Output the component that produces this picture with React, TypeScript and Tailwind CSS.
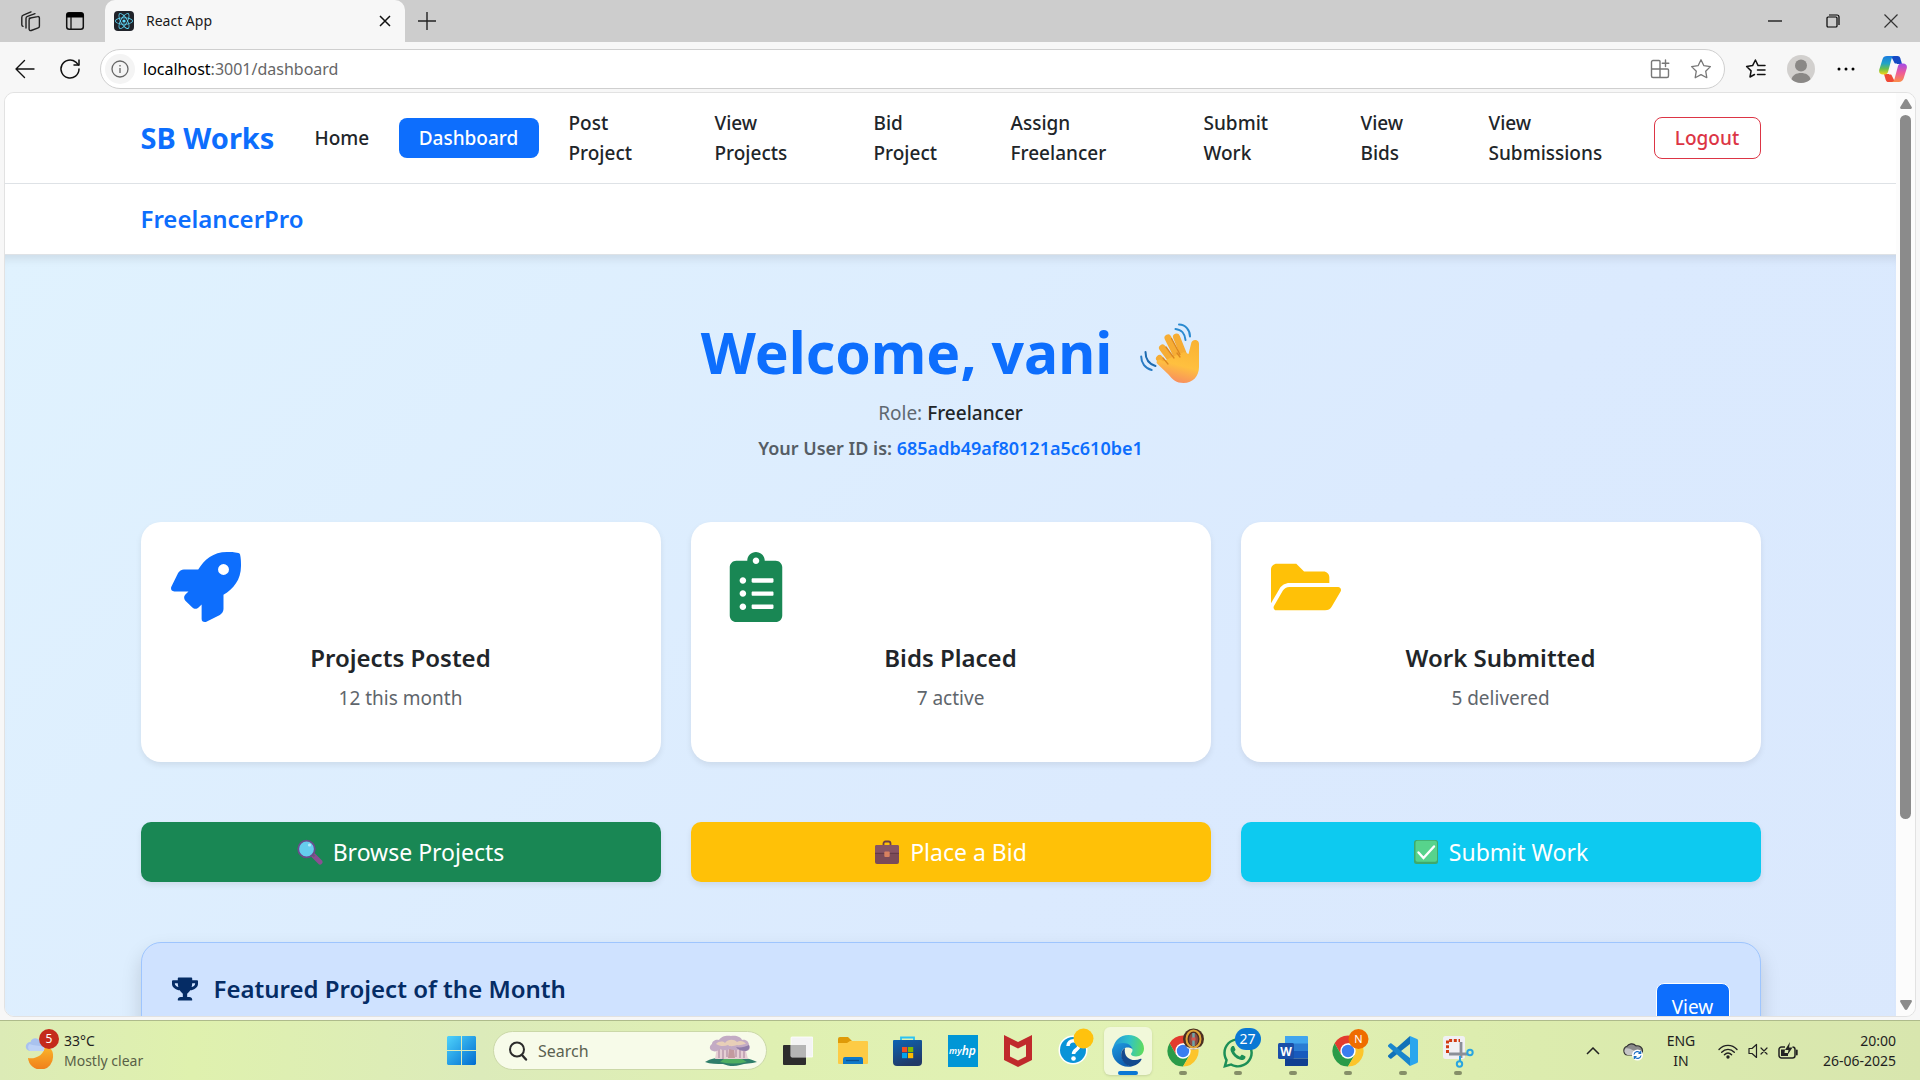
import type { ReactNode } from 'react';
import { FaClipboardList, FaFolderOpen, FaReact, FaRocket, FaTrophy, FaWhatsapp } from 'react-icons/fa';

/* ---------- Browser icons ---------- */

function WorkspacesIcon() {
  return (
    <svg viewBox="0 0 22 22" className="size-[22px]" fill="none" stroke="#222" strokeWidth="1.4" strokeLinejoin="round" strokeLinecap="round">
      <path d="M10.2 8.3 18.6 6.6a1.4 1.4 0 0 1 1.8 1.4v8.3c0 .8-.5 1.4-1.2 1.6l-7 2.6c-1 .4-2.1-.3-2.1-1.4V9.900a1.600 1.600 0 0 1 1.200-1.500z" />
      <path d="M7 18V8.600c0-1 .6-1.900 1.500-2.200L16 3.700" />
      <path d="M4 16.400c-.7-.2-1.200-.8-1.200-1.600V7.400c0-1 .6-1.900 1.500-2.200L12 1.900" />
    </svg>
  );
}

function TabActionsIcon() {
  return (
    <svg viewBox="0 0 20 20" className="size-5" fill="none">
      <rect x="1.700" y="1.700" width="16.600" height="16.600" rx="2.500" stroke="#111" strokeWidth="1.500" />
      <path d="M1.500 6.500V4a2.500 2.500 0 0 1 2.500-2.500h12A2.500 2.500 0 0 1 18.500 4v2.500z" fill="#000" />
      <path d="M6 6v12" stroke="#111" strokeWidth="1.300" />
    </svg>
  );
}

function BackIcon() {
  return (
    <svg viewBox="0 0 20 20" className="size-5" fill="none" stroke="#111" strokeWidth="1.400" strokeLinecap="round" strokeLinejoin="round">
      <path d="M19 10H1M9.500 1.500 1 10l8.500 8.500" />
    </svg>
  );
}

function ReloadIcon() {
  return (
    <svg viewBox="0 0 22 22" className="size-[22px]" fill="none" stroke="#111" strokeWidth="1.500" strokeLinecap="round" strokeLinejoin="round">
      <path d="M20 11a9 9 0 1 1-3.200-6.900L19.600 7" />
      <path d="M20 2v5h-5" />
    </svg>
  );
}

function InfoIcon() {
  return (
    <svg viewBox="0 0 18 18" className="size-[18px]" fill="none" stroke="#666" strokeWidth="1.300">
      <circle cx="9" cy="9" r="8" />
      <path d="M9 8v5M9 5v1.400" />
    </svg>
  );
}

function AppsAddIcon() {
  return (
    <svg viewBox="0 0 20 20" className="size-5" fill="none" stroke="#777" strokeWidth="1.400" strokeLinejoin="round" strokeLinecap="round">
      <path d="M10 2.500a1 1 0 0 0-1-1H3a1.500 1.500 0 0 0-1.500 1.500v14A1.500 1.500 0 0 0 3 18.500h14a1.500 1.500 0 0 0 1.500-1.500v-6a1 1 0 0 0-1-1h-16M10 2.500v16" />
      <path d="M15.500 1v6.500M12.200 4.200h6.600" />
    </svg>
  );
}

function StarIcon() {
  return (
    <svg viewBox="0 0 22 22" className="size-[22px]" fill="none" stroke="#777" strokeWidth="1.300" strokeLinejoin="round">
      <path d="m11 1.800 2.900 5.900 6.500.9-4.700 4.600 1.100 6.500-5.800-3.100-5.800 3.100 1.100-6.500L1.600 8.600l6.500-.9z" />
    </svg>
  );
}

function FavoritesIcon() {
  return (
    <svg viewBox="0 0 22 22" className="size-[22px]" fill="none" stroke="#111" strokeWidth="1.500" strokeLinejoin="round" strokeLinecap="round">
      <path d="M9.500 16.500 5 19l1.100-6.100L1.600 8.500l6-.9L10.400 2l2.700 5.600H20" />
      <path d="M12.500 12H20M12.500 16.500H20" />
    </svg>
  );
}

function AvatarIcon() {
  return (
    <svg viewBox="0 0 28 28" className="size-7">
      <circle cx="14" cy="14" r="14" fill="#d2d0ce" />
      <circle cx="14" cy="10.500" r="6" fill="#8a8886" />
      <path d="M4.500 24.200C5.500 20 9.300 18 14 18s8.500 2 9.500 6.200A14 14 0 0 1 14 28a14 14 0 0 1-9.500-3.800z" fill="#8a8886" />
    </svg>
  );
}

function CopilotIcon() {
  return (
    <svg viewBox="0 0 28 28" className="size-7">
      <defs>
        <linearGradient id="cpA" x1="0" y1="0" x2="0" y2="1">
          <stop offset="0" stopColor="#1b7be0" />
          <stop offset=".4" stopColor="#21a3c8" />
          <stop offset=".7" stopColor="#6cc04a" />
          <stop offset="1" stopColor="#f5d416" />
        </linearGradient>
        <linearGradient id="cpB" x1="0" y1="0" x2="0" y2="1">
          <stop offset="0" stopColor="#a24be8" />
          <stop offset=".5" stopColor="#ee5b9a" />
          <stop offset="1" stopColor="#fb8f4a" />
        </linearGradient>
      </defs>
      <path d="M12 1h6.500c1.500 0 2.300.8 2.800 2.300L23 9h-7z" fill="#1549c4" />
      <path d="M16 27H9.500c-1.500 0-2.300-.8-2.800-2.300L5 19h7z" fill="#ee4a36" />
      <path d="M8 1h7c-1.400.4-2 1.500-2.500 3L9 17c-.5 1.500-1.500 2.500-3 2.500H4c-3 0-4.500-2-3.700-5L3.500 4.200C4.100 2.200 5.800 1 8 1z" fill="url(#cpA)" />
      <path d="M20 27h-7c1.400-.4 2-1.500 2.500-3L19 11c.5-1.500 1.500-2.500 3-2.500h2c3 0 4.500 2 3.700 5l-3.200 10.300c-.6 2-2.300 3.200-4.500 3.200z" fill="url(#cpB)" />
      <path d="M13.500 8.500H18L14.500 19.500H10z" fill="#fdf7fb" />
    </svg>
  );
}

/* ---------- Emoji drawings ---------- */

function WaveEmoji() {
  return (
    <svg viewBox="0 0 60 60" className="size-[60px]" fill="none" strokeLinecap="round">
      <defs>
        <linearGradient id="hand" gradientUnits="userSpaceOnUse" x1="44" y1="14" x2="32" y2="60">
          <stop offset="0" stopColor="#f9b233" />
          <stop offset=".6" stopColor="#ffc03f" />
          <stop offset="1" stopColor="#f78a62" />
        </linearGradient>
      </defs>
      <path d="m19.500 35.500 9 10M22.500 25l11 15M28 15l11 22M36.500 14l8 20" stroke="#f6ad35" strokeWidth="7" />
      <path d="M17 38c2-2 4-1.500 6 .5L30 35l14-6 4.500 2L51 21c.5-5.500 8.500-5 8 .5V44c0 9-6 16-15.500 16-7 0-11-3.500-15-8.500L17.500 41c-1-1.200-1.300-2-.5-3z" fill="url(#hand)" />
      <path d="m26 24 8 11M31.500 15.500l8.500 16M37 30l3 4M23 35l5 6" stroke="#dc8720" strokeWidth="1.300" />
      <path d="M35.500 6c6 .5 9.500 5 10 11" stroke="#2a8ad0" strokeWidth="2" />
      <path d="M39 1.500c6.500 0 11 5.500 11 12" stroke="#2a8ad0" strokeWidth="2" />
      <path d="M5.500 29c0 6.500 3.500 12 10 14" stroke="#1e6bb0" strokeWidth="2" />
      <path d="M1.200 33.500c0 6.500 4 12 10.500 13.500" stroke="#2a7cc4" strokeWidth="2" />
    </svg>
  );
}

function MagnifierEmoji() {
  return (
    <svg viewBox="0 0 26 26" className="size-[26px]">
      <path d="m16 16 7 7" stroke="#8a4f93" strokeWidth="5" strokeLinecap="round" />
      <path d="m14.500 14.500 3 3" stroke="#6b5b78" strokeWidth="2" />
      <circle cx="9.500" cy="10" r="8.300" fill="#65cdee" stroke="#6a4c8c" strokeWidth="1.800" />
      <circle cx="12.500" cy="6" r="1.600" fill="#b4ecfb" />
    </svg>
  );
}

function BriefcaseEmoji() {
  return (
    <svg viewBox="0 0 26 26" className="size-[26px]">
      <path d="M9.500 6V4.500a2 2 0 0 1 2-2h3a2 2 0 0 1 2 2V6" fill="none" stroke="#6b3f4c" strokeWidth="1.800" />
      <rect x="1" y="6" width="24" height="19" rx="2" fill="#7b4b58" />
      <path d="M1 14V8a2 2 0 0 1 2-2h20a2 2 0 0 1 2 2v6z" fill="#875564" />
      <path d="M1 14.300h24" stroke="#5e3744" strokeWidth=".9" />
      <rect x="10.300" y="12.500" width="5.400" height="5.400" rx="1" fill="#d98160" />
    </svg>
  );
}

function CheckEmoji() {
  return (
    <svg viewBox="0 0 26 26" className="size-[26px]">
      <rect x="1" y="1" width="24" height="24" rx="2.500" fill="#3fa96b" />
      <rect x="2.500" y="1.800" width="21.500" height="21" rx="2" fill="#57d38c" />
      <path d="m5.500 13.500 5 5.500L21 7.500" fill="none" stroke="#fff" strokeWidth="2.400" strokeLinecap="round" />
    </svg>
  );
}

/* ---------- Taskbar icons ---------- */

function WeatherIcon() {
  return (
    <svg viewBox="0 0 30 36" className="h-9 w-[30px]">
      <defs>
        <linearGradient id="moon" x1="0" y1="0" x2="0" y2="1">
          <stop offset="0" stopColor="#fbb92c" />
          <stop offset="1" stopColor="#f07f1b" />
        </linearGradient>
      </defs>
      <path d="M20 12c5 2 8.500 5.500 8 11a12.500 12.500 0 0 1-25 2c6 1.500 17-2 17-13z" fill="url(#moon)" />
      <path d="M5 18a4.500 4.500 0 0 1 .5-9C6.500 5.500 10 4.500 13 6l6 5v7z" fill="#a9c2ef" />
      <path d="M5 18a4.500 4.500 0 0 1-.5-7c4 2 9 1 14.500 3v4z" fill="#bdd2f7" />
    </svg>
  );
}

function WindowsIcon() {
  return (
    <svg viewBox="0 0 29 29" className="size-[29px]">
      <defs>
        <linearGradient id="win" x1="0" y1="0" x2="29" y2="29" gradientUnits="userSpaceOnUse">
          <stop offset="0" stopColor="#4fd3fb" />
          <stop offset="1" stopColor="#006cd0" />
        </linearGradient>
      </defs>
      <path d="M1 0h13v14H0V1zM15 0h13l1 1v13H15zM0 15h14v14H1l-1-1zM15 15h14v13l-1 1H15z" fill="url(#win)" />
    </svg>
  );
}

function SearchIcon() {
  return (
    <svg viewBox="0 0 20 20" className="size-5" fill="none" stroke="#2b2b2b" strokeLinecap="round">
      <circle cx="9" cy="8.500" r="7" strokeWidth="2" />
      <path d="m14 14 4 4.500" strokeWidth="2.400" />
    </svg>
  );
}

function MushroomTreeIcon() {
  return (
    <svg viewBox="0 0 54 32" className="h-8 w-[54px]">
      <path d="M1 27c6-4 15-5 26-5s21 2 26 5c-6 2-12 1-17 3-6 2-12 1-17-1-6 0-13 0-18-2z" fill="#2f7d6a" />
      <path d="M16 27c4-4 8-6 13-6s9 3 14 6c-9 2-18 2-27 0z" fill="#4fae62" />
      <path d="M13 12h28l3 12H11z" fill="#e6cfd4" />
      <path d="M15 14v9M19 14v10M23 13v9M32 13v9M36 14v9M40 13v10" stroke="#b593a8" strokeWidth="1.300" />
      <path d="M25 13h5l1 10h-7z" fill="#c39a9f" />
      <path d="M9 16c-4-1-4-5-1-7 0-3 4-5 7-4 2-4 8-5 12-4 5-1 10 1 11 4 4-1 7 2 7 5 2 3 0 6-3 6-3 1-5-1-7-2-3 2-7 1-9 0-4 2-8 1-10 0-2 2-5 3-7 2z" fill="#c3abc4" />
      <path d="M12 9c3-3 7-3 9-1 3-4 9-4 12-1 3-2 7-1 9 2-4 0-6 2-9 1-3 1-7 2-9 0-4 2-9 1-12-1z" fill="#e8cfb8" />
      <path d="M32 12c4 1 9 0 13-2 1 3 0 5-3 6-4 0-8-1-10-4z" fill="#8f7da9" />
    </svg>
  );
}

function TaskViewIcon() {
  return (
    <svg viewBox="0 0 30 30" className="size-[30px]">
      <rect x="0" y="9" width="23" height="20" rx="1" fill="#2d2d2d" />
      <rect x="8" y="1" width="22" height="20" rx="1" fill="#f4f4f4" stroke="#fff" strokeWidth=".8" />
      <path d="M8 9h15v12H8z" fill="#b5b5b5" />
    </svg>
  );
}

function ExplorerIcon() {
  return (
    <svg viewBox="0 0 30 28" className="h-7 w-[30px]">
      <path d="M0 2a2 2 0 0 1 2-2h8l4 4v4H0z" fill="#df9a08" />
      <path d="M0 6h9l3-2h17a1 1 0 0 1 1 1v21a1 1 0 0 1-1 1H1a1 1 0 0 1-1-1z" fill="#fdcb45" />
      <path d="M5 27v-5a2 2 0 0 1 2-2h16a2 2 0 0 1 2 2v5z" fill="#0f79c9" />
      <path d="M8 23.500h13" stroke="#0a4f8f" strokeWidth="1.300" />
    </svg>
  );
}

function StoreIcon() {
  return (
    <svg viewBox="0 0 29 30" className="h-[30px] w-[29px]">
      <defs>
        <linearGradient id="store" x1="0" y1="0" x2=".4" y2="1">
          <stop offset="0" stopColor="#0c64b4" />
          <stop offset="1" stopColor="#213a68" />
        </linearGradient>
      </defs>
      <path d="M8 5V1.500h13V5" fill="none" stroke="#2cc3f3" strokeWidth="1.800" />
      <path d="M1 4h27a1 1 0 0 1 1 1v21a4 4 0 0 1-4 4H4a4 4 0 0 1-4-4V5a1 1 0 0 1 1-1z" fill="url(#store)" />
      <path d="M9 11h5.200v5.200H9z" fill="#f25022" />
      <path d="M15 11h5.200v5.200H15z" fill="#7fba00" />
      <path d="M9 17h5.200v5.200H9z" fill="#00a4ef" />
      <path d="M15 17h5.200v5.200H15z" fill="#ffb900" />
    </svg>
  );
}

function MyHpIcon() {
  return (
    <span className="flex h-8 w-[30px] items-center justify-center bg-[#0096d6] text-[9px] font-semibold italic leading-none text-white">
      my<span className="text-xs leading-none">hp</span>
    </span>
  );
}

function McAfeeIcon() {
  return (
    <svg viewBox="0 0 28 32" className="h-8 w-7">
      <path d="m0 0 14 7L28 0v25l-14 7-14-7z" fill="#c02a2c" />
      <path d="m6 9.500 8 4 8-4V21.500l-8 4-8-4z" fill="#e6f2ba" />
    </svg>
  );
}

function HelpIcon() {
  return (
    <svg viewBox="0 0 36 38" className="h-[38px] w-9">
      <circle cx="15" cy="22" r="14.500" fill="#fff" />
      <circle cx="15" cy="22" r="13" fill="#0a94d8" />
      <path d="M10 18c0-7 11-7 11-.5 0 4.500-5.500 4-5.500 8.500" fill="none" stroke="#fff" strokeWidth="3.500" />
      <circle cx="15.500" cy="30.500" r="2.300" fill="#fff" />
      <circle cx="25.500" cy="10.500" r="10" fill="#ffc20e" />
    </svg>
  );
}

function EdgeIcon() {
  return (
    <svg viewBox="0 0 32 32" className="size-8">
      <defs>
        <linearGradient id="edTop" x1="0" y1=".4" x2="1" y2=".5">
          <stop offset="0" stopColor="#2397d8" />
          <stop offset=".5" stopColor="#2fc2c9" />
          <stop offset="1" stopColor="#5fdc5c" />
        </linearGradient>
        <linearGradient id="edLeft" x1="0" y1="0" x2=".5" y2="1">
          <stop offset="0" stopColor="#1e9ce0" />
          <stop offset="1" stopColor="#0d5eb0" />
        </linearGradient>
      </defs>
      <path d="M1 14C2 6 8 0 16.500 0 25 0 32 6 32 13.500c0 5-3.500 8-8 8-3 0-5-1-5-2.500 0-1 1.500-1.500 1.500-4 0-3.500-4-6-9-6-5 0-9 2-10.500 5z" fill="url(#edTop)" />
      <path d="M0 16c0-4.500 5-8 11-8 6 0 9.500 3.500 9.500 6.500-1-1.500-3-2-5-2-4 0-7 3.500-6 8.500 1 6 6 10.500 11 10.200C10 34 0 26 0 16z" fill="url(#edLeft)" />
      <path d="M13 13c-4 2-4.500 7-3 11 2 5.500 6.500 8 11 7 4-1 7-3.500 8.500-6.500.3-.7-.2-1-.8-.7C20.500 27.500 11 23 13 13z" fill="#134a8e" />
    </svg>
  );
}

function ChromeIcon({ badge }: { badge: ReactNode }) {
  return (
    <svg viewBox="0 0 38 40" className="h-10 w-[38px]">
      <path d="M3.600 16.200A15.500 15.500 0 0 1 30.400 16.200H17L10.300 27.900z" fill="#e33b2e" />
      <path d="M3.600 16.200A15.500 15.500 0 0 0 17 39.500l6.700-11.600H10.300z" fill="#2a9b48" />
      <path d="M30.400 16.200A15.500 15.500 0 0 1 17 39.500l6.700-11.600L17 16.200z" fill="#fcc52b" />
      <circle cx="17" cy="24" r="7.700" fill="#fff" />
      <circle cx="17" cy="24" r="6.200" fill="#3a7df0" />
      {badge}
    </svg>
  );
}

function IdolBadge() {
  return (
    <g>
      <circle cx="27.500" cy="12" r="10.500" fill="#4a2f22" />
      <ellipse cx="27.500" cy="12" rx="7" ry="8.500" fill="none" stroke="#e0a53a" strokeWidth="2" />
      <ellipse cx="27.500" cy="12.500" rx="4.500" ry="6.800" fill="#8e4a44" />
      <path d="M27.500 6v13" stroke="#6fa5a8" strokeWidth="2.500" />
      <path d="M25.500 12h4" stroke="#d8574f" strokeWidth="3" />
      <path d="M20 19c4 3 11 3 15 0l-1.500 2.200c-3 1.800-9 1.800-12 0z" fill="#e8dfd2" />
    </g>
  );
}

function LetterBadge() {
  return (
    <g>
      <circle cx="27.500" cy="12" r="10" fill="#ef6c00" />
      <text x="27.500" y="16" textAnchor="middle" fontSize="11" fill="#fff">N</text>
    </g>
  );
}

function WordIcon() {
  return (
    <svg viewBox="0 0 30 30" className="size-[30px]">
      <path d="M7 0h22a1 1 0 0 1 1 1v7H7z" fill="#41a5ee" />
      <path d="M7 7.500h23V15H7z" fill="#2b7cd3" />
      <path d="M7 15h23v7.500H7z" fill="#185abd" />
      <path d="M7 22.500h23V29a1 1 0 0 1-1 1H7z" fill="#103f91" />
      <rect x="0" y="7" width="16" height="16" rx="1.500" fill="#1a4fa8" />
      <text x="8" y="19.500" textAnchor="middle" fontSize="12" fontWeight="700" fill="#fff">W</text>
    </svg>
  );
}

function VsCodeIcon() {
  return (
    <svg viewBox="0 0 30 30" className="size-[30px]">
      <path d="M22 0v8L3.500 22.500c-.5.400-1 .4-1.500 0L.3 21c-.5-.5-.5-1.200 0-1.700z" fill="#1272b8" />
      <path d="M22 30v-8L3.500 7.500c-.5-.4-1-.4-1.500 0L.3 9c-.5.500-.5 1.200 0 1.700z" fill="#1a86cc" />
      <path d="m22 0 7 3c.6.300 1 .8 1 1.500v21c0 .7-.4 1.200-1 1.500l-7 3z" fill="#2aa6ee" />
    </svg>
  );
}

function SnipIcon() {
  return (
    <svg viewBox="0 0 32 34" className="h-[34px] w-8" fill="none">
      <rect x="1" y="2" width="22" height="23" rx="2.500" fill="#f1f0f4" />
      <path d="M5.500 19V6.500H18" stroke="#d13a12" strokeWidth="3" strokeDasharray="3 1.700" />
      <path d="M19 8v16M7 20h19" stroke="#8b8f98" strokeWidth="2.800" />
      <circle cx="28" cy="18.500" r="2.700" stroke="#2aa5e0" strokeWidth="2" />
      <path d="M18 22v5" stroke="#2aa5e0" strokeWidth="2" />
      <circle cx="17.500" cy="30" r="2.700" stroke="#2aa5e0" strokeWidth="2" />
    </svg>
  );
}

function WhatsAppIcon() {
  return (
    <span className="relative flex size-[34px] items-center justify-center">
      <FaWhatsapp className="mt-1 size-[34px] shrink-0 text-[#1d8f57]" />
      <span className="absolute -top-1.5 left-3.5 flex h-[22px] w-[26px] items-center justify-center rounded-full bg-[#0a78d4] text-sm leading-none text-white">
        27
      </span>
    </span>
  );
}

function OneDriveIcon() {
  return (
    <svg viewBox="0 0 22 20" className="h-5 w-[22px]">
      <path d="M5.500 14a4.500 4.500 0 0 1-.5-8.700C6.500 2.800 11 1.500 14 4.800c4-.5 6.500 2 6.500 4.700s-1.500 4.500-4 4.500z" fill="#8b8b8b" stroke="#333" strokeWidth="1.200" />
      <path d="M5.500 14a4 4 0 0 1-2-6.500c5-1 8 3.500 16 4-.5 1.500-1.500 2.500-3 2.500z" fill="#c6c6c6" />
      <circle cx="15.500" cy="14" r="5.500" fill="#fff" />
      <path d="M12 13.500a3.600 3.600 0 0 1 6.400-1.500M19 14.500a3.600 3.600 0 0 1-6.400 1.500M18.700 10v2.300h-2.300M12.300 18v-2.300h2.300" fill="none" stroke="#1a6fc4" strokeWidth="1.200" />
    </svg>
  );
}

function WifiIcon() {
  return (
    <svg viewBox="0 0 20 16" className="h-4 w-5" fill="none" stroke="#222" strokeWidth="1.400" strokeLinecap="round">
      <path d="M1 6.500c5-5.500 13-5.500 18 0M3.700 9.200c3.600-3.800 9-3.800 12.600 0M6.400 11.800c2.200-2.200 5-2.200 7.200 0" />
      <circle cx="10" cy="14" r="1" fill="#222" />
    </svg>
  );
}

function MutedIcon() {
  return (
    <svg viewBox="0 0 20 16" className="h-4 w-5" fill="none" stroke="#222" strokeWidth="1.200" strokeLinecap="round" strokeLinejoin="round">
      <path d="M1 5.500h3L8.500 1.500v13L4 10.500H1zM13 5l6 6M19 5l-6 6" />
    </svg>
  );
}

function BatteryIcon() {
  return (
    <svg viewBox="0 0 20 18" className="h-[18px] w-5" fill="none">
      <path d="M7 5H3.500A2.500 2.500 0 0 0 1 7.500v6A2.500 2.500 0 0 0 3.500 16h11a2.500 2.500 0 0 0 2.500-2.500v-6A2.500 2.500 0 0 0 14.500 5" stroke="#222" strokeWidth="1.500" />
      <path d="M3 7.500h4L6.500 11H10v3H3z" fill="#222" />
      <path d="M18.800 8.500v4" stroke="#222" strokeWidth="1.800" strokeLinecap="round" />
      <path d="m12 0-5 8h3.500L9.500 13l5-7.500H11z" fill="#222" />
    </svg>
  );
}

/* ---------- Browser chrome ---------- */

function TitleBar() {
  return (
    <div className="flex h-[42px] shrink-0 items-stretch bg-[#cdcdcd]">
      <div className="flex w-[105px] items-center gap-6 pl-[19px]">
        <button aria-label="Workspaces"><WorkspacesIcon /></button>
        <button aria-label="Tab actions"><TabActionsIcon /></button>
      </div>
      <div className="flex w-[300px] items-center rounded-t-[10px] bg-[#f7f7f7] pr-2.5 pl-[9px]">
        <span className="flex size-5 items-center justify-center rounded-sm bg-[#20232a]">
          <FaReact className="size-[18px] text-[#61dafb]" />
        </span>
        <span className="ml-3 flex-1 text-sm text-[#1a1a1a]">React App</span>
        <button aria-label="Close tab" className="p-1">
          <svg viewBox="0 0 12 12" className="size-3" stroke="#111" strokeWidth="1.500"><path d="m1 1 10 10M11 1 1 11" /></svg>
        </button>
      </div>
      <button aria-label="New tab" className="flex w-11 items-center justify-center">
        <svg viewBox="0 0 18 18" className="size-[18px]" stroke="#222" strokeWidth="1.400"><path d="M9 0v18M0 9h18" /></svg>
      </button>
      <div className="flex-1" />
      <button aria-label="Minimize" className="flex w-[58px] items-center justify-center">
        <svg viewBox="0 0 14 14" className="size-3.5" stroke="#000" strokeWidth="1.200"><path d="M0 7h14" /></svg>
      </button>
      <button aria-label="Restore" className="flex w-[58px] items-center justify-center">
        <svg viewBox="0 0 14 14" className="size-3.5" fill="none" stroke="#000" strokeWidth="1.200">
          <rect x="1" y="3" width="10" height="10" rx="1" />
          <path d="M3 1h8a2 2 0 0 1 2 2v8" />
        </svg>
      </button>
      <button aria-label="Close" className="flex w-[58px] items-center justify-center">
        <svg viewBox="0 0 14 14" className="size-3.5" stroke="#333" strokeWidth="1.200"><path d="m.5.500 13 13M13.500.500l-13 13" /></svg>
      </button>
    </div>
  );
}

function Toolbar() {
  return (
    <div className="flex h-[50px] shrink-0 items-center bg-[#f7f7f7] pt-1 pr-[13px] pl-[15px]">
      <button aria-label="Back"><BackIcon /></button>
      <button aria-label="Reload" className="ml-6"><ReloadIcon /></button>
      <div className="ml-[19px] flex h-10 flex-1 items-center rounded-full border border-[#cfcfcf] bg-white pr-3 pl-1">
        <button aria-label="Site information" className="flex size-[30px] items-center justify-center rounded-full bg-[#f4f4f4]">
          <InfoIcon />
        </button>
        <a href="http://localhost:3001/dashboard" className="ml-2 flex-1 text-base text-[#666]">
          <span className="text-black">localhost</span>:3001/dashboard
        </a>
        <button aria-label="App available"><AppsAddIcon /></button>
        <button aria-label="Add to favorites" className="ml-5"><StarIcon /></button>
      </div>
      <button aria-label="Favorites" className="ml-5"><FavoritesIcon /></button>
      <button aria-label="Profile" className="ml-5"><AvatarIcon /></button>
      <button aria-label="Settings and more" className="ml-[22px]">
        <svg viewBox="0 0 18 4" className="h-1 w-[18px]"><circle cx="2" cy="2" r="1.500" /><circle cx="9" cy="2" r="1.500" /><circle cx="16" cy="2" r="1.500" /></svg>
      </button>
      <button aria-label="Copilot" className="ml-6"><CopilotIcon /></button>
    </div>
  );
}

/* ---------- Site ---------- */

const navItems = [
  { first: 'Post', second: 'Project', width: 'w-[136px]' },
  { first: 'View', second: 'Projects', width: 'w-[149px]' },
  { first: 'Bid', second: 'Project', width: 'w-[127px]' },
  { first: 'Assign', second: 'Freelancer', width: 'w-[183px]' },
  { first: 'Submit', second: 'Work', width: 'w-[147px]' },
  { first: 'View', second: 'Bids', width: 'w-[118px]' },
  { first: 'View', second: 'Submissions', width: 'w-[176px]' },
];

function SiteNav() {
  return (
    <nav className="border-b border-[#dee2e6] bg-white">
      <div className="mx-auto flex h-[90px] w-full max-w-[1620px] items-center">
        <a href="#brand" className="w-[154px] text-[29px] font-bold whitespace-nowrap text-[#0d6efd]">SB Works</a>
        <ul className="flex flex-1 items-center gap-2.5 text-[19px] leading-[30px] font-medium text-[#212529]">
          <li><a href="#home" className="block w-[94px] px-5">Home</a></li>
          <li>
            <a href="#dashboard" className="flex h-10 w-[140px] items-center justify-center rounded-lg bg-[#0d6efd] text-white">Dashboard</a>
          </li>
          {navItems.map((item) => (
            <li key={item.first + item.second} className={item.width}>
              <a href="#page" className="block px-5">{item.first}<br />{item.second}</a>
            </li>
          ))}
        </ul>
        <button className="h-[42px] w-[107px] rounded-lg border border-[#dc3545] text-[19px] font-medium text-[#dc3545]">Logout</button>
      </div>
    </nav>
  );
}

function StatCard({ icon, title, detail }: { icon: ReactNode; title: string; detail: string }) {
  return (
    <article className="h-60 rounded-[20px] bg-white p-[30px] shadow-[0_3px_6px_rgba(0,0,0,0.08)]">
      {icon}
      <h2 className="mt-5 text-center text-2xl leading-8 font-semibold text-[#212529]">{title}</h2>
      <p className="mt-[9px] text-center text-[19px] leading-[30px] text-[#5f666c]">{detail}</p>
    </article>
  );
}

function ActionButton({ icon, label, color }: { icon: ReactNode; label: string; color: string }) {
  return (
    <button className={`flex h-[60px] items-center justify-center gap-2.5 rounded-[10px] text-[23px] text-white shadow-[0_3px_6px_rgba(0,0,0,0.08)] ${color}`}>
      {icon}
      {label}
    </button>
  );
}

function Dashboard() {
  return (
    <main className="flex-1 bg-[linear-gradient(135deg,#e0f2fe,#dbeafe_60%,#dae8fd)] shadow-[inset_0_10px_10px_-6px_rgba(0,0,0,0.09)]">
      <div className="mx-auto w-full max-w-[1620px] pt-[58px]">
        <header className="text-center">
          <h1 className="flex h-20 items-center justify-center gap-7 text-[57px] font-bold text-[#0d6efd]">
            Welcome, vani
            <WaveEmoji />
          </h1>
          <p className="mt-[5px] text-[19px] leading-[30px] text-[#5f6871]">Role: <strong className="font-medium text-[#212529]">Freelancer</strong></p>
          <p className="mt-[5px] text-lg leading-[30px] font-semibold text-[#555d65]">
            Your User ID is: <span className="text-[#0d6efd]">685adb49af80121a5c610be1</span>
          </p>
        </header>
        <section className="mt-[59px] grid grid-cols-3 gap-[30px]">
          <StatCard icon={<FaRocket className="size-[70px] text-[#0d6efd]" />} title="Projects Posted" detail="12 this month" />
          <StatCard icon={<FaClipboardList className="size-[70px] text-[#198754]" />} title="Bids Placed" detail="7 active" />
          <StatCard icon={<FaFolderOpen className="size-[70px] text-[#ffc107]" />} title="Work Submitted" detail="5 delivered" />
        </section>
        <section className="mt-[60px] grid grid-cols-3 gap-[30px]">
          <ActionButton icon={<MagnifierEmoji />} label="Browse Projects" color="bg-[#198754]" />
          <ActionButton icon={<BriefcaseEmoji />} label="Place a Bid" color="bg-[#ffc107]" />
          <ActionButton icon={<CheckEmoji />} label="Submit Work" color="bg-[#0dcaf0]" />
        </section>
        <section className="mt-[60px] flex h-[180px] justify-between rounded-[20px] border border-[#9ec5fe] bg-[#cfe2ff] px-[30px] shadow-[0_10px_20px_rgba(0,0,0,0.15)]">
          <h2 className="mt-[31px] flex h-[30px] items-center gap-4 text-2xl font-semibold text-[#052c65]">
            <FaTrophy className="size-[26px]" />
            Featured Project of the Month
          </h2>
          <button className="mt-10 h-12 w-[74px] rounded-lg border border-white bg-[#0d6efd] text-[19px] text-white">View</button>
        </section>
      </div>
    </main>
  );
}

function ScrollBar() {
  return (
    <div className="flex w-[19px] shrink-0 flex-col items-center bg-[#fcfcfc] pt-1.5 pb-1.5">
      <svg viewBox="0 0 12 10" className="h-2.5 w-3" fill="#8b8b8b"><path d="M6 0c.6 0 1 .3 1.300.8L11.700 8c.5 1 0 2-1 2H1.300c-1 0-1.500-1-1-2L4.700.800C5 .300 5.400 0 6 0z" /></svg>
      <div className="mt-1.5 h-[704px] w-[11px] rounded-full bg-[#8b8b8b]" />
      <div className="flex-1" />
      <svg viewBox="0 0 12 10" className="h-2.5 w-3 rotate-180" fill="#8b8b8b"><path d="M6 0c.6 0 1 .3 1.300.8L11.700 8c.5 1 0 2-1 2H1.300c-1 0-1.500-1-1-2L4.700.800C5 .300 5.400 0 6 0z" /></svg>
    </div>
  );
}

/* ---------- Taskbar ---------- */

const taskIcons: { name: string; icon: ReactNode; state: 'idle' | 'open' | 'active' }[] = [
  { name: 'Task view', icon: <TaskViewIcon />, state: 'idle' },
  { name: 'File Explorer', icon: <ExplorerIcon />, state: 'idle' },
  { name: 'Store', icon: <StoreIcon />, state: 'idle' },
  { name: 'myHP', icon: <MyHpIcon />, state: 'idle' },
  { name: 'McAfee', icon: <McAfeeIcon />, state: 'idle' },
  { name: 'Help', icon: <span className="-mt-2 ml-1.5"><HelpIcon /></span>, state: 'idle' },
  { name: 'Edge', icon: <EdgeIcon />, state: 'active' },
  { name: 'Chrome', icon: <span className="-mt-2 ml-1"><ChromeIcon badge={<IdolBadge />} /></span>, state: 'open' },
  { name: 'WhatsApp', icon: <WhatsAppIcon />, state: 'open' },
  { name: 'Word', icon: <WordIcon />, state: 'open' },
  { name: 'Chrome profile N', icon: <span className="-mt-2 ml-1"><ChromeIcon badge={<LetterBadge />} /></span>, state: 'open' },
  { name: 'Visual Studio Code', icon: <VsCodeIcon />, state: 'open' },
  { name: 'Snipping Tool', icon: <SnipIcon />, state: 'open' },
];

function TaskButton({ name, icon, state }: { name: string; icon: ReactNode; state: string }) {
  return (
    <button aria-label={name} className="flex w-[55px] justify-center">
      <span className={state === 'active' ? 'relative flex size-12 items-center justify-center rounded-md bg-[#f1f8da] shadow-sm' : 'relative flex size-12 items-center justify-center'}>
        {icon}
        {state === 'active' && <span className="absolute bottom-0 h-1 w-5 rounded-full bg-[#0a78d4]" />}
        {state === 'open' && <span className="absolute bottom-0 h-1 w-2 rounded-full bg-[#868f68]" />}
      </span>
    </button>
  );
}

function Taskbar() {
  return (
    <footer className="flex h-[60px] shrink-0 items-center border-t border-[#aebb8b] bg-[linear-gradient(90deg,#dcebb6,#dff1ae_10%,#dcebba_25%,#dff0b2_40%,#e2f2b4_60%,#dcecae_80%,#d8e6ae)]">
      <button className="flex w-[435px] items-center pl-[25px] text-left text-sm leading-5">
        <span className="relative">
          <WeatherIcon />
          <span className="absolute -top-1 left-3.5 flex size-5 items-center justify-center rounded-full bg-[#c42b1c] text-xs text-white">5</span>
        </span>
        <span className="ml-[9px]">
          <span className="block text-[#1f1f1f]">33°C</span>
          <span className="block text-[#596047]">Mostly clear</span>
        </span>
      </button>
      <button aria-label="Start" className="flex w-[52px] justify-center"><WindowsIcon /></button>
      <label className="ml-1.5 flex h-[39px] w-[274px] items-center rounded-full border border-[#cbd8a8] bg-[#f7fbe9] pr-2 pl-3.5">
        <SearchIcon />
        <input aria-label="Search" placeholder="Search" className="ml-2.5 w-0 flex-1 bg-transparent text-base outline-none placeholder:text-[#5b6150]" />
        <MushroomTreeIcon />
      </label>
      <div className="ml-[3px] flex">
        {taskIcons.map((item) => (
          <TaskButton key={item.name} name={item.name} icon={item.icon} state={item.state} />
        ))}
      </div>
      <div className="flex flex-1 items-center justify-end pr-6 text-sm leading-5 text-[#1f1f1f]">
        <button aria-label="Show hidden icons">
          <svg viewBox="0 0 14 8" className="h-2 w-3.5" fill="none" stroke="#222" strokeWidth="1.500"><path d="m1 7 6-6 6 6" /></svg>
        </button>
        <button aria-label="OneDrive" className="ml-[22px]"><OneDriveIcon /></button>
        <button className="ml-[22px] w-[30px] text-center">ENG<br />IN</button>
        <button aria-label="Network, sound and battery" className="ml-[22px] flex items-center gap-2.5">
          <WifiIcon />
          <MutedIcon />
          <BatteryIcon />
        </button>
        <button className="w-[98px] text-right">20:00<br />26-06-2025</button>
      </div>
    </footer>
  );
}

export default function App() {
  return (
    <div className="flex h-screen flex-col overflow-hidden bg-[#f7f7f7] font-['Noto_Sans','Open_Sans',sans-serif]">
      <TitleBar />
      <Toolbar />
      <div className="mx-1 mb-[3px] flex min-h-0 flex-1 overflow-hidden rounded-[10px] border border-[#e2e2e2]">
        <div className="flex min-w-0 flex-1 flex-col overflow-hidden">
          <SiteNav />
          <header className="border-b border-[#dee2e6] bg-white">
            <div className="mx-auto flex h-[70px] w-full max-w-[1620px] items-center">
              <a href="#home" className="text-2xl font-semibold text-[#0d6efd]">FreelancerPro</a>
            </div>
          </header>
          <Dashboard />
        </div>
        <ScrollBar />
      </div>
      <Taskbar />
    </div>
  );
}
